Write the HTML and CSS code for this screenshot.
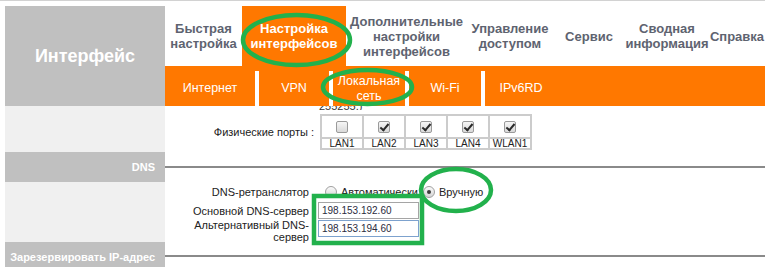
FILE: index.html
```html
<!DOCTYPE html>
<html lang="ru">
<head>
  <meta charset="UTF-8" />
  <title>Интерфейс</title>
  <meta name="viewport" content="width=device-width, initial-scale=1.0"/>
  <link rel="stylesheet" href="styles.css">
</head>
<body>
  <div class="top-rule"></div>

  <div class="page">
    <div class="header">
      <div class="brand">Интерфейс</div>
      <div class="nav">
        <div class="tabs">
          <div class="tab tab-quick">Быстрая<br>настройка</div>
          <div class="tab tab-iface active">Настройка<br>интерфейсов</div>
          <div class="tab tab-adv">Дополнительные<br>настройки<br>интерфейсов</div>
          <div class="tab tab-access">Управление<br>доступом</div>
          <div class="tab tab-service">Сервис</div>
          <div class="tab tab-status">Сводная<br>информация</div>
          <div class="tab tab-help">Справка</div>
        </div>
        <div class="subtabs">
          <div class="subtab sub-inet">Интернет</div>
          <div class="subtab sub-vpn">VPN</div>
          <div class="subtab">Локальная<br>сеть</div>
          <div class="subtab">Wi-Fi</div>
          <div class="subtab">IPv6RD</div>
        </div>
      </div>
    </div>

    <div class="body-row">
      <div class="side">
        <div class="side-blank blank-ports"></div>
        <div class="side-head">DNS</div>
        <div class="side-blank blank-dns"></div>
        <div class="side-head">Зарезервировать IP-адрес</div>
      </div>

      <div class="main">
        <div class="cut"><span>255255.)</span></div>

        <div class="row ports-row">
          <div class="label">Физические порты :</div>
          <table class="ports">
            <tr class="boxes">
              <td><span class="check"></span></td>
              <td><span class="check on"></span></td>
              <td><span class="check on"></span></td>
              <td><span class="check on"></span></td>
              <td><span class="check on"></span></td>
            </tr>
            <tr class="names">
              <td>LAN1</td>
              <td>LAN2</td>
              <td>LAN3</td>
              <td>LAN4</td>
              <td>WLAN1</td>
            </tr>
          </table>
        </div>

        <div class="dns">
          <div class="row row-relay">
            <div class="label">DNS-ретранслятор</div>
            <div class="radios">
              <span class="radio first"></span><span class="opt">Автоматически</span>
              <span class="radio on"></span><span class="opt">Вручную</span>
            </div>
          </div>
          <div class="row">
            <div class="label">Основной DNS-сервер</div>
            <input class="field" type="text" value="198.153.192.60">
          </div>
          <div class="row row-top">
            <div class="label">Альтернативный DNS-<br>сервер</div>
            <input class="field focus" type="text" value="198.153.194.60">
          </div>
        </div>
        <div class="dns-end"></div>
      </div>
    </div>
  </div>

  <!-- green marker annotations drawn over the page -->
  <svg class="marks" width="774" height="267" viewBox="0 0 774 267">
    <g fill="none" stroke="#22b14c" stroke-width="4.5">
      <ellipse cx="296.5" cy="40" rx="53.5" ry="25"/>
      <ellipse cx="367.5" cy="87" rx="44.5" ry="17"/>
      <ellipse cx="456" cy="190" rx="35" ry="21"/>
      <rect x="314" y="196" width="108" height="47"/>
    </g>
  </svg>
</body>
</html>
```

FILE: styles.css
```css
body {
  margin: 0;
  font-family: "Liberation Sans", Arial, sans-serif;
  background: #fff;
  color: #222;
  overflow: hidden;
}

.top-rule {
  width: 765px;
  height: 1px;
  background: #d2d2d2;
  margin-bottom: 5px;
}

.page {
  width: 760px;
  margin-left: 5px;
}

/* Header */
.header {
  display: flex;
  height: 100px;
}

.brand {
  width: 160px;
  background: #c0c0c0;
  color: #fff;
  font-size: 18px;
  font-weight: bold;
  display: flex;
  align-items: center;
  justify-content: center;
}

.nav {
  width: 600px;
  display: flex;
  flex-direction: column;
}

.tabs {
  display: flex;
  height: 60px;
}

.tab {
  display: flex;
  align-items: center;
  justify-content: center;
  text-align: center;
  font-size: 13px;
  font-weight: bold;
  line-height: 15px;
  color: #5e6370;
  white-space: nowrap;
}

.tab.active {
  background: #ff7800;
  color: #fff;
}

.tab-quick { width: 77px; }
.tab-iface { width: 104px; }
.tab-adv { width: 121px; }
.tab-access { width: 86px; }
.tab-service { width: 72px; }
.tab-status { width: 84px; }
.tab-help { width: 56px; }

.subtabs {
  display: flex;
  height: 40px;
  padding-top: 5px;
  box-sizing: border-box;
  background: #ff7800;
}

.subtab {
  width: 72px;
  border-left: 4px solid #fff;
  display: flex;
  align-items: center;
  justify-content: center;
  text-align: center;
  color: #fff;
  font-size: 12.5px;
  line-height: 15px;
}

.sub-inet {
  width: 90px;
  border-left: none;
}

.sub-vpn {
  width: 70px;
}

/* Body */
.body-row {
  display: flex;
}

.side {
  width: 160px;
}

.side-blank {
  background: #f0f0f0;
}

.blank-ports { height: 46px; }
.blank-dns { height: 60px; }

.side-head {
  height: 30px;
  line-height: 30px;
  background: #c0c0c0;
  color: #fff;
  font-size: 11px;
  font-weight: bold;
  text-align: right;
  padding-right: 10px;
  white-space: nowrap;
}

.main {
  width: 600px;
}

.cut {
  height: 4px;
  overflow: hidden;
  padding-left: 154px;
  font-size: 11px;
  line-height: 12px;
  color: #333;
}

.cut span {
  display: block;
  margin-top: -6px;
}

.row {
  display: flex;
  align-items: center;
}

.label {
  width: 144px;
  margin-right: 9px;
  text-align: right;
  font-size: 11px;
  line-height: 12px;
  color: #222;
  white-space: nowrap;
}

.ports-row {
  margin-top: 4px;
}

.ports-row .label {
  width: 149px;
  margin-right: 6px;
}

.ports {
  border-collapse: separate;
  border-spacing: 2px;
  background: #cccccc;
}

.ports td {
  width: 40px;
  padding: 0;
  background: #fff;
  text-align: center;
}

.boxes td {
  height: 21px;
}

.names td {
  height: 9px;
  line-height: 9px;
  font-size: 10px;
  color: #222;
}

.check {
  display: block;
  position: relative;
  width: 12px;
  height: 12px;
  margin: 0 auto;
  box-sizing: border-box;
  border: 1px solid #9a9a9a;
  border-radius: 2px;
  background: linear-gradient(#f6f6f6, #d9d9d9);
}

.check.on::after {
  content: "";
  position: absolute;
  left: 3px;
  top: 0;
  width: 3px;
  height: 7px;
  border: solid #2a2a2a;
  border-width: 0 2px 2px 0;
  transform: rotate(40deg);
}

.dns {
  border-top: 2px solid #8a8a8a;
  margin-top: 16px;
  padding: 14px 0 12px;
  display: flex;
  flex-direction: column;
  gap: 1px;
}

.row-relay {
  height: 19px;
}

.radios {
  display: flex;
  align-items: center;
  font-size: 11px;
  color: #222;
}

.radio {
  position: relative;
  width: 12px;
  height: 12px;
  box-sizing: border-box;
  border: 1px solid #a0a0a0;
  border-radius: 50%;
  background: linear-gradient(#fbfbfb, #d4d4d4);
  margin: 0 4px 0 5px;
}

.radio.first {
  margin-left: 7px;
}

.radio.on::after {
  content: "";
  position: absolute;
  left: 3px;
  top: 3px;
  width: 4px;
  height: 4px;
  border-radius: 50%;
  background: #3c3c3c;
}

.field {
  width: 101px;
  height: 17px;
  box-sizing: border-box;
  margin: 0;
  padding: 0 3px;
  border: 1px solid #a5a5a5;
  font-family: "Liberation Sans", Arial, sans-serif;
  font-size: 10px;
  color: #2b2b40;
  background: #fff;
}

.field.focus {
  border-color: #7da2ce;
}

.row-top {
  align-items: flex-start;
}

.row-top .label {
  margin-top: -1px;
}

.dns-end {
  border-top: 2px solid #8a8a8a;
}

.marks {
  position: absolute;
  left: 0;
  top: 0;
  pointer-events: none;
}
```
